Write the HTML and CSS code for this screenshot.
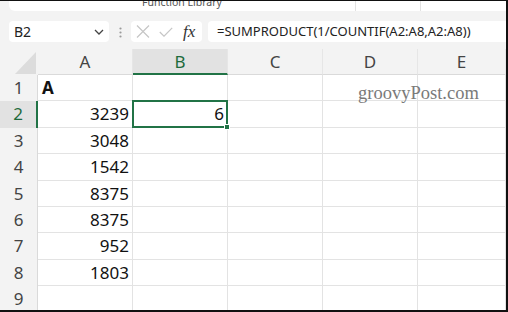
FILE: index.html
```html
<!DOCTYPE html>
<html lang="en">
<head>
    <meta charset="UTF-8">
    <title>Excel - SUMPRODUCT unique count</title>
    <link rel="stylesheet" href="styles.css">
</head>
<body>
    <div class="frame">
        <!-- Ribbon (bottom edge only) -->
        <div class="ribbon">
            <div class="ribbon-group wide"><span class="group-label">Function Library</span></div>
            <div class="ribbon-group narrow"></div>
            <div class="ribbon-group"></div>
        </div>

        <!-- Formula bar -->
        <div class="formula-bar">
            <div class="name-box">
                <span>B2</span>
                <svg class="chevron" width="10" height="6" viewBox="0 0 10 6"><path d="M1 1 L5 5 L9 1" fill="none" stroke="#444" stroke-width="1.3"/></svg>
            </div>
            <div class="grip">
                <svg width="3" height="11" viewBox="0 0 3 11"><circle cx="1.5" cy="1.5" r="1.1" fill="#9a9a9a"/><circle cx="1.5" cy="5.5" r="1.1" fill="#9a9a9a"/><circle cx="1.5" cy="9.5" r="1.1" fill="#9a9a9a"/></svg>
            </div>
            <div class="fx-box">
                <svg width="14" height="13" viewBox="0 0 14 13"><path d="M1 0.5 L13 12.5 M13 0.5 L1 12.5" stroke="#c6c6c6" stroke-width="1.2"/></svg>
                <svg width="14" height="10" viewBox="0 0 14 10"><path d="M0.8 5 L5 9.2 L13.2 0.8" fill="none" stroke="#c6c6c6" stroke-width="1.2"/></svg>
                <span class="fx">fx</span>
            </div>
            <div class="formula">=SUMPRODUCT(1/COUNTIF(A2:A8,A2:A8))</div>
        </div>

        <!-- Sheet -->
        <div class="sheet">
            <div class="corner"><span class="corner-tri"></span></div>
            <div class="col-head">A</div>
            <div class="col-head active">B</div>
            <div class="col-head">C</div>
            <div class="col-head">D</div>
            <div class="col-head">E</div>

            <div class="row-head">1</div>
            <div class="cell text">A</div><div class="cell"></div><div class="cell"></div><div class="cell"></div><div class="cell"></div>

            <div class="row-head active">2</div>
            <div class="cell num">3239</div><div class="cell num selected">6<span class="handle"></span></div><div class="cell"></div><div class="cell"></div><div class="cell"></div>

            <div class="row-head">3</div>
            <div class="cell num">3048</div><div class="cell"></div><div class="cell"></div><div class="cell"></div><div class="cell"></div>

            <div class="row-head">4</div>
            <div class="cell num">1542</div><div class="cell"></div><div class="cell"></div><div class="cell"></div><div class="cell"></div>

            <div class="row-head">5</div>
            <div class="cell num">8375</div><div class="cell"></div><div class="cell"></div><div class="cell"></div><div class="cell"></div>

            <div class="row-head">6</div>
            <div class="cell num">8375</div><div class="cell"></div><div class="cell"></div><div class="cell"></div><div class="cell"></div>

            <div class="row-head">7</div>
            <div class="cell num">952</div><div class="cell"></div><div class="cell"></div><div class="cell"></div><div class="cell"></div>

            <div class="row-head">8</div>
            <div class="cell num">1803</div><div class="cell"></div><div class="cell"></div><div class="cell"></div><div class="cell"></div>

            <div class="row-head">9</div>
            <div class="cell"></div><div class="cell"></div><div class="cell"></div><div class="cell"></div><div class="cell"></div>

            <!-- Watermark over the grid -->
            <div class="watermark">groovyPost.com</div>
        </div>
    </div>
</body>
</html>
```

FILE: styles.css
```css
* {
    margin: 0;
    padding: 0;
    box-sizing: border-box;
}
body {
    font-family: "Noto Sans", "Open Sans", sans-serif;
    background-color: #f3f3f3;
    color: #222;
    width: 508px;
    height: 312px;
    overflow: hidden;
}
.frame {
    width: 508px;
    height: 312px;
    overflow: hidden;
    border-top: 1px solid #111;
    border-right: 2px solid #111;
    border-bottom: 2px solid #111;
    background-color: #f3f3f3;
}
/* Ribbon strip */
.ribbon {
    display: flex;
    height: 10px;
    margin-left: 9px;
    background: #fff;
    border-radius: 0 0 0 6px;
    overflow: hidden;
}
.ribbon-group {
    flex: 1;
    position: relative;
    text-align: center;
    border-right: 1px solid #e2e2e2;
}
.ribbon-group.wide {
    flex: 0 0 347px;
}
.ribbon-group.narrow {
    flex: 0 0 65px;
}
.ribbon-group:last-child {
    border-right: none;
}
.group-label {
    display: block;
    font-size: 10.5px;
    line-height: 12px;
    margin-top: -5px;
    color: #555;
}
/* Formula bar */
.formula-bar {
    display: flex;
    align-items: center;
    height: 21px;
    margin-top: 10px;
    padding-left: 9px;
}
.name-box {
    width: 100px;
    height: 21px;
    background: #fff;
    border-radius: 4px;
    display: flex;
    align-items: center;
    justify-content: space-between;
    padding: 0 5px 0 5px;
    font-size: 14px;
    color: #222;
}
.chevron {
    margin-top: 1px;
}
.grip {
    width: 22px;
    display: flex;
    justify-content: center;
    padding-top: 1px;
}
.fx-box {
    width: 71px;
    height: 21px;
    background: #fff;
    border-radius: 4px;
    display: flex;
    align-items: center;
    padding-left: 5px;
    gap: 8px;
}
.fx-box svg:nth-child(2) {
    margin-left: 1px;
}
.fx {
    font-family: "Liberation Serif", serif;
    font-style: italic;
    font-size: 17px;
    color: #333;
    margin-left: 2px;
    line-height: 21px;
}
.formula {
    flex: 1;
    height: 21px;
    margin-left: 6px;
    background: #fff;
    border-radius: 4px 0 0 4px;
    padding-left: 9px;
    font-size: 13px;
    line-height: 21px;
    color: #222;
    white-space: nowrap;
}
/* Sheet grid */
.sheet {
    position: relative;
    margin-top: 7px;
    display: grid;
    grid-template-columns: 38px 95px 95px 95px 95px 1fr;
    grid-template-rows: 26px repeat(9, 26.4px);
}
.corner {
    position: relative;
}
.corner-tri {
    position: absolute;
    left: 15px;
    top: 3px;
    width: 21px;
    height: 22px;
    background: #dcdcdc;
    clip-path: polygon(100% 0, 100% 100%, 0 100%);
}
.col-head {
    text-align: center;
    font-size: 17px;
    line-height: 26px;
    color: #444;
    border-right: 1px solid #e6e6e6;
    border-bottom: 1px solid #dadada;
}
.col-head.active {
    background: #e2e2e2;
    color: #1e6b3c;
    border-bottom: 2px solid #217346;
}
.row-head {
    text-align: center;
    font-size: 17px;
    line-height: 26px;
    color: #444;
    border-right: 1px solid #dadada;
}
.row-head.active {
    background: #e2e2e2;
    color: #1e6b3c;
    border-right: 2px solid #217346;
}
.cell {
    background: #fff;
    border-right: 1px solid #e3e3e3;
    border-bottom: 1px solid #e3e3e3;
    font-size: 17px;
    line-height: 26px;
    color: #111;
    white-space: nowrap;
}
.cell.num {
    text-align: right;
    padding-right: 3px;
}
.cell.text {
    font-weight: bold;
    padding-left: 4px;
}
.cell.selected {
    position: relative;
    border: 2px solid #217346;
    margin: -1px 0 0 -1px;
    line-height: 24px;
    padding-right: 2px;
}
.handle {
    position: absolute;
    right: -4px;
    bottom: -4px;
    width: 6px;
    height: 6px;
    background: #217346;
    border: 1px solid #fff;
}
.watermark {
    position: absolute;
    left: 358px;
    top: 34px;
    font-family: "Liberation Serif", serif;
    font-size: 18.5px;
    color: #7a7a7a;
}
```
